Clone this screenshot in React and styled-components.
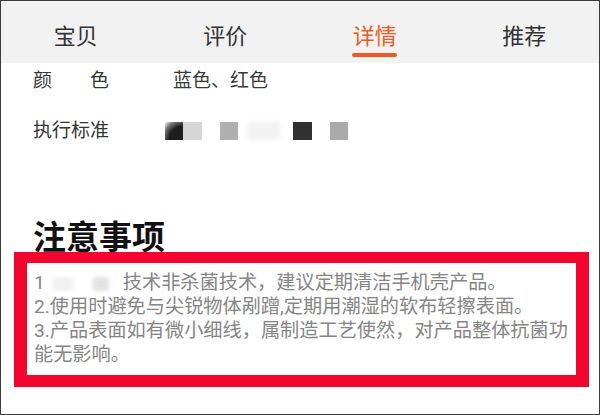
import React from "react";
import styled, { createGlobalStyle } from "styled-components";

const Global = createGlobalStyle`
  html, body { margin: 0; padding: 0; background: #fff; }
  body { font-family: Roboto, "Noto Sans CJK SC", "Noto Sans", sans-serif; }
  * { box-sizing: border-box; }
`;

const Frame = styled.div`
  width: 600px;
  height: 415px;
  border: 1px solid #3c3c3c;
  background: #fff;
  overflow: hidden;
  display: flex;
  flex-direction: column;
`;

const TabBar = styled.nav`
  height: 62px;
  flex: none;
  background: #f2f2f2;
  display: grid;
  grid-template-columns: repeat(4, 1fr);
`;

const Tab = styled.div`
  display: flex;
  flex-direction: column;
  align-items: center;
  padding-top: 21px;
  font-size: 22px;
  line-height: 30px;
  color: ${(p) => (p.$active ? "#ee5a22" : "#333")};
`;

const Underline = styled.span`
  margin-top: 1px;
  width: 45px;
  height: 4px;
  border-radius: 2px;
  background: #ee5a1e;
`;

const Specs = styled.div`
  padding: 5px 0 0 32px;
  display: flex;
  flex-direction: column;
  gap: 24px;
`;

const Row = styled.div`
  display: flex;
  align-items: center;
  font-size: 19px;
  line-height: 26px;
  color: #333;
`;

const Label = styled.div`
  width: 140px;
  flex: none;
  display: flex;
`;

const LabelInner = styled.span`
  width: 76px;
  display: flex;
  justify-content: space-between;
`;

const Value = styled.div`
  color: #3a3a3a;
  display: flex;
  align-items: center;
  margin-left: ${(p) => p.$shift || 0}px;
`;

const Mosaic = styled.span`
  display: inline-block;
  flex: none;
  width: ${(p) => p.$w}px;
  height: 18px;
  margin-left: ${(p) => p.$ml || 0}px;
  background: ${(p) => p.$bg};
  filter: blur(${(p) => p.$blur || 0.6}px);
`;

const Heading = styled.h2`
  margin: 74px 0 0 32px;
  font-size: 33px;
  line-height: 34px;
  font-weight: 700;
  color: #111;
  font-family: "Noto Sans CJK SC", sans-serif;
`;

const NoticeBox = styled.div`
  margin-left: 13px;
  width: 575px;
  border-style: solid;
  border-color: #f2062e;
  border-width: 11px 13px 12px 13px;
  padding: 8px 0 8px 7px;
  font-size: 19.2px;
  line-height: 24px;
  color: #858585;
`;

const Line = styled.p`
  margin: 0;
`;

const Smudge = styled.span`
  display: inline-block;
  vertical-align: middle;
  width: ${(p) => p.$w}px;
  height: 14px;
  margin-left: ${(p) => p.$ml}px;
  background: ${(p) => p.$bg};
  filter: blur(2px);
`;

const Gap = styled.span`
  display: inline-block;
  width: ${(p) => p.$w}px;
`;

const tabs = ["宝贝", "评价", "详情", "推荐"];

export default function App() {
  return (
    <>
      <Global />
      <Frame>
        <TabBar>
          {tabs.map((t, i) => (
            <Tab key={t} $active={i === 2}>
              {t}
              {i === 2 && <Underline />}
            </Tab>
          ))}
        </TabBar>

        <Specs>
          <Row>
            <Label>
              <LabelInner>
                <span>颜</span>
                <span>色</span>
              </LabelInner>
            </Label>
            <Value>蓝色、红色</Value>
          </Row>
          <Row>
            <Label>执行标准</Label>
            <Value $shift={-8}>
              <Mosaic $w={18} $bg="radial-gradient(circle at 100% 100%, #1e1e1e 0 55%, #777 78%, #fff 100%)" />
              <Mosaic $w={19} $bg="#d6d6d6" />
              <Mosaic $w={18} $ml={18} $bg="#b0b0b0" />
              <Mosaic $w={33} $ml={9} $bg="#f2f2f2" $blur={2} />
              <Mosaic $w={19} $ml={13} $bg="#313131" />
              <Mosaic $w={18} $ml={18} $bg="#aaaaaa" />
            </Value>
          </Row>
        </Specs>

        <Heading>注意事项</Heading>

        <NoticeBox>
          <Line>
            1
            <Smudge $w={20} $ml={8} $bg="#f0f0f0" />
            <Smudge $w={16} $ml={20} $bg="#e2e2e2" />
            <Gap $w={14} />
            技术非杀菌技术，建议定期清洁手机壳产品。
          </Line>
          <Line>2.使用时避免与尖锐物体剐蹭,定期用潮湿的软布轻擦表面。</Line>
          <Line>3.产品表面如有微小细线，属制造工艺使然，对产品整体抗菌功能无影响。</Line>
        </NoticeBox>
      </Frame>
    </>
  );
}
